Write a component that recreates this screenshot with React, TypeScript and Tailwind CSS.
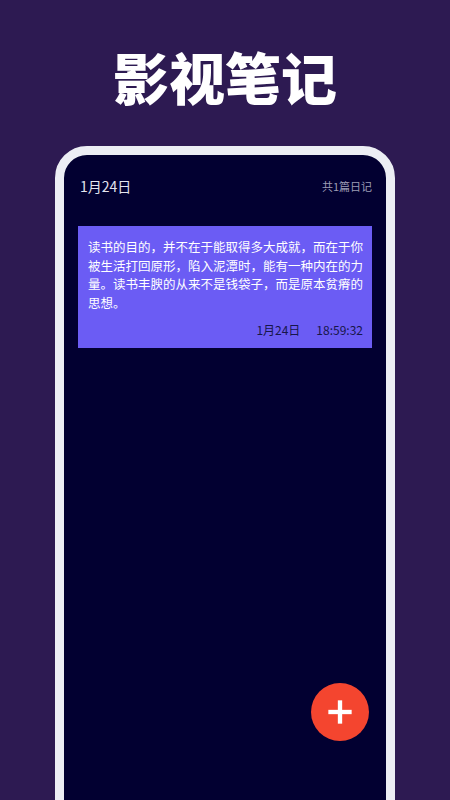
import { Plus } from 'lucide-react';

const note =
  '读书的目的，并不在于能取得多大成就，而在于你被生活打回原形，陷入泥潭时，能有一种内在的力量。读书丰腴的从来不是钱袋子，而是原本贫瘠的思想。';

const fontStack = { fontFamily: '"Noto Sans CJK SC", "Noto Sans", sans-serif' };

function NoteCard() {
  return (
    <div className="mx-[14px] mt-[30px] bg-[#6b5cf4] pl-[10px] pr-[8px] pt-[12px] pb-[9px]">
      <p className="text-[12.5px] leading-[18.7px] text-white">{note}</p>
      <div className="mt-[8px] flex justify-end gap-[16px] pr-[1px] text-[12px] leading-[18px] text-[#17164a]">
        <span>1月24日</span>
        <span>18:59:32</span>
      </div>
    </div>
  );
}

export default function App() {
  return (
    <div
      className="flex h-[800px] w-[450px] flex-col items-center overflow-hidden bg-[#2d1a52]"
      style={fontStack}
    >
      <h1 className="pt-[48px] text-[56px] leading-[56px] font-black text-white">影视笔记</h1>

      <div className="relative mt-[42px] h-[700px] w-[340px] shrink-0 rounded-[32px] border-[9px] border-[#eceef4] bg-[#020031]">
        <div className="flex items-center justify-between pt-[21px] pl-4 pr-[14px]">
          <span className="text-[14px] leading-[20px] text-[#e4e4ee]">1月24日</span>
          <span className="text-[11px] leading-[20px] text-[#9c9cb4]">共1篇日记</span>
        </div>

        <NoteCard />

        <button
          type="button"
          className="absolute top-[528px] right-[17px] flex h-[58px] w-[58px] items-center justify-center rounded-full bg-[#f4452f] text-white"
        >
          <Plus size={40} strokeWidth={2.6} strokeLinecap="butt" />
        </button>
      </div>
    </div>
  );
}
